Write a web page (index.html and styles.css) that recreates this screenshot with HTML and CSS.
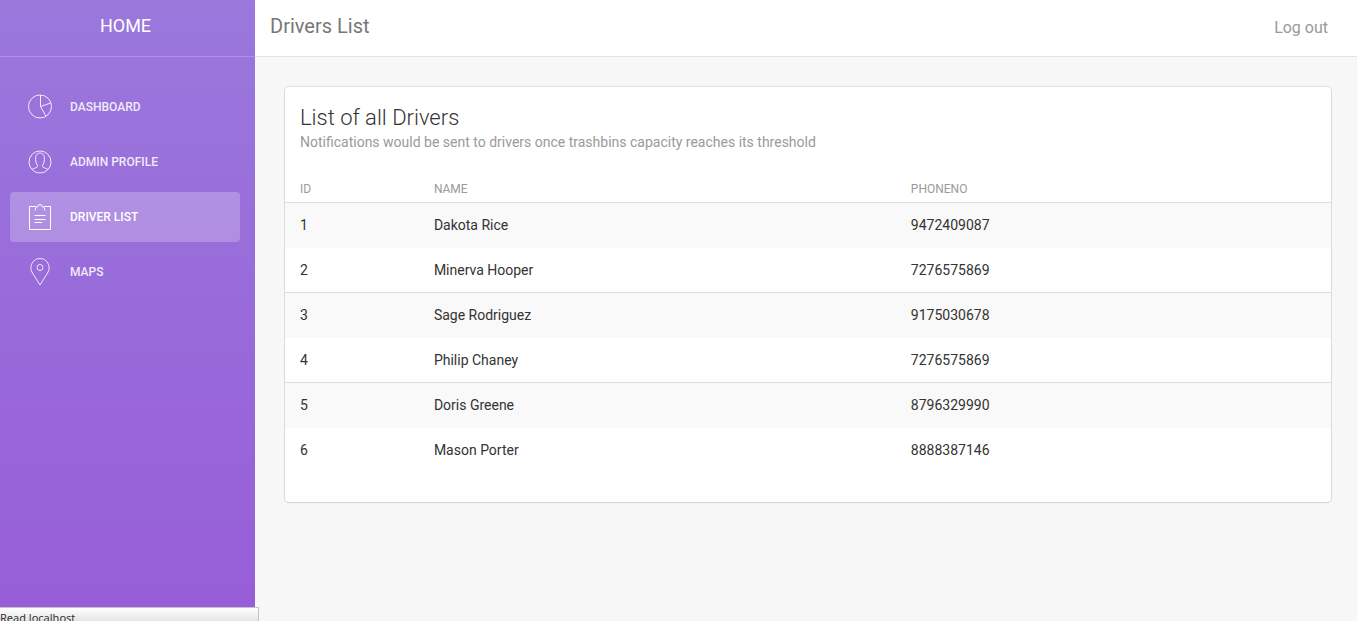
FILE: index.html
```html
<!DOCTYPE html>
<html lang="en">
<head>
<meta charset="utf-8">
<meta name="viewport" content="width=device-width, initial-scale=1">
<title>Drivers List</title>
<link rel="stylesheet" href="styles.css">
</head>
<body>
<div class="layout">
  <aside class="sidebar">
    <a class="brand" href="#">HOME</a>
    <nav class="menu">
      <a class="menu-item" href="#">
        <svg class="icon" viewBox="0 0 30 30" aria-hidden="true"><circle cx="15" cy="14.500" r="11.5"/><path d="M15.500 3V14.500L25.600 11M15.500 14.500L21 24.200"/></svg>
        <span>DASHBOARD</span>
      </a>
      <a class="menu-item" href="#">
        <svg class="icon" viewBox="0 0 30 30" aria-hidden="true"><circle cx="15" cy="15" r="11"/><path d="M7 22.500C8.500 20.800 12.500 21.300 12.500 19.300C12.500 17.500 10.700 16.500 10.700 12.500V10.500C10.700 7.800 12.500 6 15 6S19.300 7.800 19.300 10.500V12.500C19.300 16.500 17.500 17.500 17.500 19.300C17.500 21.300 21.500 20.800 23 22.500"/></svg>
        <span>ADMIN PROFILE</span>
      </a>
      <a class="menu-item active" href="#">
        <svg class="icon" viewBox="0 0 30 30" aria-hidden="true"><path d="M11 4.500H4.500V27.500H25.500V4.500H19M10 8.500L11 5.500L13 4.500Q13 2.500 15 2.500T17 4.500L19 5.500L20 8.500M9.500 13.500H20.500M9.500 17.500H20.500M9.500 20.500H17"/></svg>
        <span>DRIVER LIST</span>
      </a>
      <a class="menu-item" href="#">
        <svg class="icon" viewBox="0 0 30 30" aria-hidden="true"><path d="M15 28L7.500 16C6 13.500 5.700 11.800 6 9.500C6.700 5 10.300 1.500 15 1.500S23.300 5 24 9.500C24.300 11.800 24 13.500 22.500 16Z"/><circle cx="15" cy="10.500" r="3"/></svg>
        <span>MAPS</span>
      </a>
    </nav>
  </aside>
  <div class="main">
    <header class="topbar">
      <a class="page-title" href="#">Drivers List</a>
      <a class="logout" href="#">Log out</a>
    </header>
    <main class="content">
      <section class="card">
        <div class="card-header">
          <h1 class="card-title">List of all Drivers</h1>
          <p class="card-note">Notifications would be sent to drivers once trashbins capacity reaches its threshold</p>
        </div>
        <table class="drivers">
          <colgroup><col class="col-id"><col class="col-name"><col></colgroup>
          <thead><tr><th scope="col">ID</th><th scope="col">NAME</th><th scope="col">PHONENO</th></tr></thead>
          <tbody>
            <tr><td>1</td><td>Dakota Rice</td><td>9472409087</td></tr>
            <tr><td>2</td><td>Minerva Hooper</td><td>7276575869</td></tr>
            <tr><td>3</td><td>Sage Rodriguez</td><td>9175030678</td></tr>
            <tr><td>4</td><td>Philip Chaney</td><td>7276575869</td></tr>
            <tr><td>5</td><td>Doris Greene</td><td>8796329990</td></tr>
            <tr><td>6</td><td>Mason Porter</td><td>8888387146</td></tr>
          </tbody>
        </table>
      </section>
    </main>
  </div>
</div>
<div class="status">Read localhost</div>
</body>
</html>
```
FILE: styles.css
```css
* { box-sizing: border-box; }

body {
  margin: 0;
  overflow: hidden;
  background: #f7f7f7;
  color: #333;
  font: 14px/20px Roboto, "Liberation Sans", sans-serif;
}

a { color: inherit; text-decoration: none; }

.layout { display: flex; min-height: 100vh; }

.sidebar {
  flex: 0 0 255px;
  background: linear-gradient(#9a78dc, #975dd8);
  color: #fff;
}

.brand {
  display: block;
  padding: 11px 19px 15px 15px;
  border-bottom: 1px solid rgba(255, 255, 255, 0.2);
  font-size: 18px;
  line-height: 30px;
  text-align: center;
}

.menu {
  display: flex;
  flex-direction: column;
  gap: 5px;
  padding: 25px 15px 25px 10px;
}

.menu-item {
  display: flex;
  align-items: center;
  gap: 15px;
  height: 50px;
  padding: 0 15px;
  border-radius: 4px;
  font-size: 12px;
  font-weight: 500;
  opacity: 0.86;
}

.menu-item.active {
  background: rgba(255, 255, 255, 0.23);
  opacity: 1;
}

.icon {
  width: 30px;
  height: 30px;
  fill: none;
  stroke: #fff;
  stroke-width: 1;
}

.main { flex: 1; min-width: 0; }

.topbar {
  display: flex;
  justify-content: space-between;
  align-items: baseline;
  height: 57px;
  padding: 16px 29px 0 15px;
  background: #fff;
  border-bottom: 1px solid #e3e3e3;
}

.page-title { color: #777; font-size: 20px; }
.logout { color: #9a9a9a; font-size: 16px; }

.content { padding: 30px 26px 30px 30px; }

.card {
  padding-bottom: 30px;
  background: #fff;
  border-radius: 4px;
  box-shadow: 0 1px 2px rgba(0, 0, 0, 0.05), 0 0 0 1px rgba(63, 63, 68, 0.13);
}

.card-header { padding: 16px 15px 0; }

.card-title {
  margin: 0;
  font-size: 22px;
  font-weight: 300;
  line-height: 30px;
}

.card-note { margin: 0; color: #9a9a9a; line-height: 19px; }

.drivers {
  width: 100%;
  margin-top: 22px;
  border-collapse: separate;
  border-spacing: 0;
  table-layout: fixed;
}

.col-id { width: 12.8%; }
.col-name { width: 45.6%; }

.drivers th, .drivers td { padding: 0 15px; text-align: left; }

.drivers th {
  height: 28px;
  padding-top: 2px;
  color: #9a9a9a;
  font-size: 12px;
  font-weight: 400;
}

.drivers td { height: 44px; }

.drivers tr:nth-child(odd) td {
  height: 46px;
  padding-bottom: 1px;
  border-top: 1px solid #ddd;
  background: #f9f9f9;
}

.status {
  position: fixed;
  left: 0;
  bottom: 0;
  width: 259px;
  height: 14px;
  overflow: hidden;
  border: solid #c4c4c4;
  border-width: 1px 1px 0 0;
  background: linear-gradient(#fff, #e4e4e4);
  font: 11px/20px "Noto Sans", sans-serif;
}
```
